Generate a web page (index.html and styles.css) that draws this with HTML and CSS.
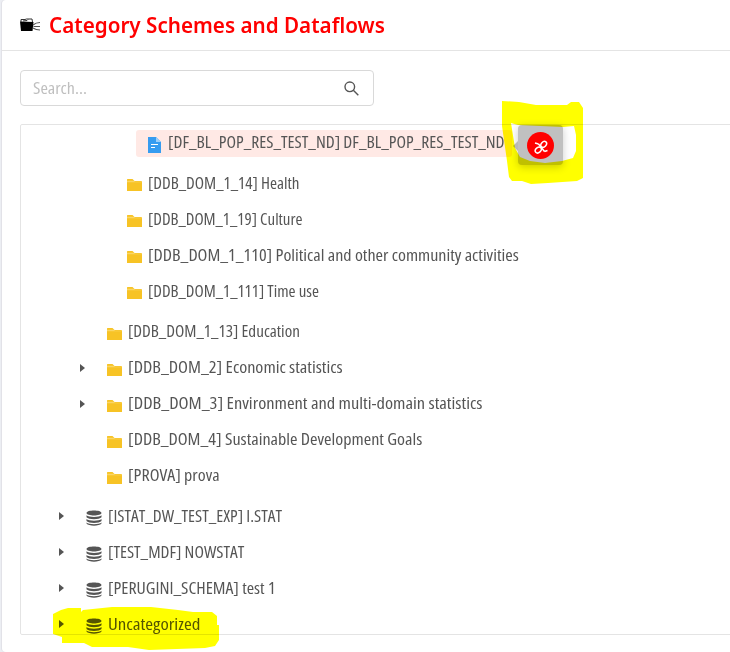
FILE: index.html
```html
<!DOCTYPE html>
<html lang="en">
<head>
<meta charset="utf-8">
<title>Category Schemes and Dataflows</title>
<link rel="stylesheet" href="styles.css">
</head>
<body>
<svg class="defs" aria-hidden="true">
  <symbol id="folder" viewBox="0 0 15 12"><path fill="#f7c325" d="M.5 0h5l2 2h6.500q1 0 1 1v9H0V.5z"/><path fill="#fad666" d="M0 1.800h7l1 .9h6.500v.5H0z"/></symbol>
  <symbol id="db" viewBox="0 0 16 16"><path fill="#555" d="M.5 3C.5-.3 15.500-.3 15.500 3S.5 6.300.5 3zM.5 5.300c2 2.300 13 2.300 15 0v2c-2 2.500-13 2.500-15 0zM.5 9c2 2.300 13 2.300 15 0v2c-2 2.500-13 2.500-15 0zM.5 12.600c2 2.300 13 2.300 15 0v1c-2 2.700-13 2.700-15 0z"/></symbol>
</svg>
<main class="page">
  <header class="header">
    <svg class="logo" viewBox="0 0 20 14"><path d="M0 3.500l1 9.500h11.500L13.500 4z"/><path fill="none" stroke="#333" d="M1 4V1.500h4L6.500 1h5.500l.5 3M3 3l4-.5 1-1"/><path fill="none" stroke="#555" stroke-width="1.200" d="M13 7q3-2.500 7-2.500M13.500 8.500H20M13 10q3 2 7 2"/></svg>
    <h1 class="title"><span>Category Schemes and Dataflows</span></h1>
  </header>
  <div class="search"><span class="placeholder">Search...</span>
    <svg class="glass" viewBox="0 0 15 15"><circle cx="5.800" cy="5.800" r="4.800"/><path d="M9.300 9.300l5 5"/></svg>
  </div>
  <section class="tree">
    <div class="group level-4">
      <div class="row file"><svg class="doc" viewBox="0 0 13 16"><path fill="#369cf0" d="M0 0h8l5 5v11H0z"/><path fill="#9bd0fb" d="M8 0v5h5z"/><path stroke="#fff" d="M3 7.500h7M3 10.500h4"/></svg><span class="label w-file">[DF_BL_POP_RES_TEST_ND] DF_BL_POP_RES_TEST_ND</span>
        <div class="popup"><span class="unlink"><svg viewBox="0 0 14 14"><path d="M4.500 4L10.500 11.500M4.500 4L1 3M10.500 11.500L13.500 10.500"/><ellipse cx="9.700" cy="4.300" rx="2.400" ry="3.300" transform="rotate(42 9.700 4.300)"/><ellipse cx="4.300" cy="10" rx="2.500" ry="3.400" transform="rotate(48 4.300 10)"/></svg></span></div>
      </div>
    </div>
    <div class="group level-3">
      <div class="row"><svg class="folder"><use href="#folder"/></svg><span class="label w-health">[DDB_DOM_1_14] Health</span></div>
      <div class="row"><svg class="folder"><use href="#folder"/></svg><span class="label w-culture">[DDB_DOM_1_19] Culture</span></div>
      <div class="row"><svg class="folder"><use href="#folder"/></svg><span class="label w-political">[DDB_DOM_1_110] Political and other community activities</span></div>
      <div class="row"><svg class="folder"><use href="#folder"/></svg><span class="label w-time">[DDB_DOM_1_111] Time use</span></div>
    </div>
    <div class="group level-2">
      <div class="row"><i class="gap"></i><svg class="folder"><use href="#folder"/></svg><span class="label w-edu">[DDB_DOM_1_13] Education</span></div>
      <div class="row"><i class="arrow"></i><svg class="folder"><use href="#folder"/></svg><span class="label w-eco">[DDB_DOM_2] Economic statistics</span></div>
      <div class="row"><i class="arrow"></i><svg class="folder"><use href="#folder"/></svg><span class="label w-env">[DDB_DOM_3] Environment and multi-domain statistics</span></div>
      <div class="row"><i class="gap"></i><svg class="folder"><use href="#folder"/></svg><span class="label w-sus">[DDB_DOM_4] Sustainable Development Goals</span></div>
      <div class="row"><i class="gap"></i><svg class="folder"><use href="#folder"/></svg><span class="label w-prova">[PROVA] prova</span></div>
    </div>
    <div class="group level-1">
      <div class="row"><i class="arrow"></i><svg class="db"><use href="#db"/></svg><span class="label w-istat">[ISTAT_DW_TEST_EXP] I.STAT</span></div>
      <div class="row"><i class="arrow"></i><svg class="db"><use href="#db"/></svg><span class="label w-now">[TEST_MDF] NOWSTAT</span></div>
      <div class="row"><i class="arrow"></i><svg class="db"><use href="#db"/></svg><span class="label w-peru">[PERUGINI_SCHEMA] test 1</span></div>
      <div class="row"><i class="arrow"></i><svg class="db"><use href="#db"/></svg><span class="label w-uncat">Uncategorized</span></div>
    </div>
  </section>
  <svg class="marker" viewBox="0 0 730 652">
    <path fill-rule="evenodd" d="M502 101L519 102 536 105H567L571 102H579L583 108V178L577 181 548 183 531 184 522 181H512L509 177 507 161 502 126zM511 123L518 125 563 127 574 126 576 135V151L573 158 562 161 545 163 530 161 520 157 515 148z"/>
    <path d="M53 614L61 610 68 608H81V612L83 610 112 607H151L178 610 193 612H212L217 616V625H219V640L215 646 205 648 149 650 128 647H92L84 643H62V637L53 634z"/>
  </svg>
</main>
<script src="fit.js"></script>
</body>
</html>
```
FILE: fit.js
```js
// Condense each label to the advance width its class declares.
document.fonts.ready.then(() => {
  document.querySelectorAll('.label, .title span, .placeholder').forEach((el) => {
    const target = parseFloat(getComputedStyle(el).getPropertyValue('--text-width'));
    if (target) el.style.transform = `scaleX(${target / el.offsetWidth})`;
  });
});
```
FILE: styles.css
```css
* { box-sizing: border-box; }
body { margin: 0; background: #eceef3; font-family: "Open Sans", "Noto Sans", sans-serif; color: #555; }
.defs { position: absolute; width: 0; height: 0; }
.page { position: relative; margin-left: 2px; height: 652px; overflow: hidden; background: #fff; border-radius: 4px 0 0 4px; box-shadow: -1px 0 #e2e2e8; }
.header { height: 51px; padding-left: 18px; display: flex; align-items: center; border-bottom: 1px solid #e4e4e4; }
.logo { width: 20px; height: 14px; margin-top: -1px; flex: none; }
.title { margin: -2px 0 0 9px; font-family: "Noto Sans", sans-serif; font-size: 22px; line-height: 30px; font-weight: 600; color: #f00; white-space: nowrap; }
.title span { --text-width: 336; display: inline-block; transform-origin: left; }
.search { width: 354px; height: 36px; margin: 19px 0 0 18px; padding: 0 14px 0 12px; display: flex; align-items: center; justify-content: space-between; border: 1px solid #d9d9d9; border-radius: 4px; }
.placeholder { --text-width: 54; color: #bfbfbf; font-size: 16px; font-stretch: 75%; transform-origin: left; }
.glass { width: 15px; height: 15px; fill: none; stroke: #555; stroke-width: 1.4; }
.tree { width: 740px; height: 511px; margin: 18px 0 0 18px; border: 1px solid #e4e4e4; border-radius: 2px; }
.row { height: 36px; display: flex; align-items: center; }
.label { display: inline-block; transform-origin: left; margin-left: 6px; font-size: 16px; line-height: 24px; font-stretch: 75%; white-space: nowrap; }
.folder { width: 15px; height: 12px; margin-top: 3px; flex: none; }
.db { width: 16px; height: 16px; margin-top: 4px; flex: none; }
.db + .label { margin-left: 6px; }
.doc { width: 13px; height: 16px; margin-top: 3px; flex: none; }
.level-4 { padding: 5px 0 0 115px; height: 40px; }
.level-3 { padding: 0 0 4px 106px; }
.level-2 { padding: 0 0 5px 59px; }
.level-2 .folder { margin-top: 5px; }
.level-3 .folder { margin-top: 4px; }
.level-1 { padding-left: 38px; }
.arrow, .gap { width: 27px; height: 9px; flex: none; }
.level-2 .arrow { margin-top: 2px; }
.level-1 .arrow { margin-top: 1px; }
.arrow::before { content: ""; display: block; width: 0; border-left: 5px solid #555; border-top: 4.5px solid transparent; border-bottom: 4.5px solid transparent; }
.file { position: relative; width: 376px; height: 27px; padding-left: 12px; background: #ffe9e5; border-radius: 3px; }
.file .label { margin-left: 7px; margin-top: -3px; }
.popup { position: absolute; left: 382px; top: -5px; width: 45px; height: 40px; display: flex; align-items: center; justify-content: center; background: #c0c0c0; border-radius: 4px; box-shadow: 0 2px 8px rgba(0, 0, 0, .2); }
.popup::before { content: ""; position: absolute; left: -5px; top: 16px; border-right: 5px solid #b9b9b9; border-top: 5px solid transparent; border-bottom: 5px solid transparent; }
.unlink { width: 27px; height: 27px; display: grid; place-items: center; background: #f00; border-radius: 50%; }
.unlink svg { width: 14px; height: 14px; margin-top: 4px; fill: none; stroke: #fff; stroke-width: 1.5; }
.marker { position: absolute; left: -2px; top: 0; width: 730px; height: 652px; fill: #ff0; mix-blend-mode: multiply; pointer-events: none; }
.w-file { --text-width: 337; }
.w-health { --text-width: 151; }
.w-culture { --text-width: 155; }
.w-political { --text-width: 371; }
.w-time { --text-width: 171; }
.w-edu { --text-width: 172; }
.w-eco { --text-width: 214; }
.w-env { --text-width: 354; }
.w-sus { --text-width: 294; }
.w-prova { --text-width: 91; }
.w-istat { --text-width: 174; }
.w-now { --text-width: 136; }
.w-peru { --text-width: 167; }
.w-uncat { --text-width: 92; }
```
